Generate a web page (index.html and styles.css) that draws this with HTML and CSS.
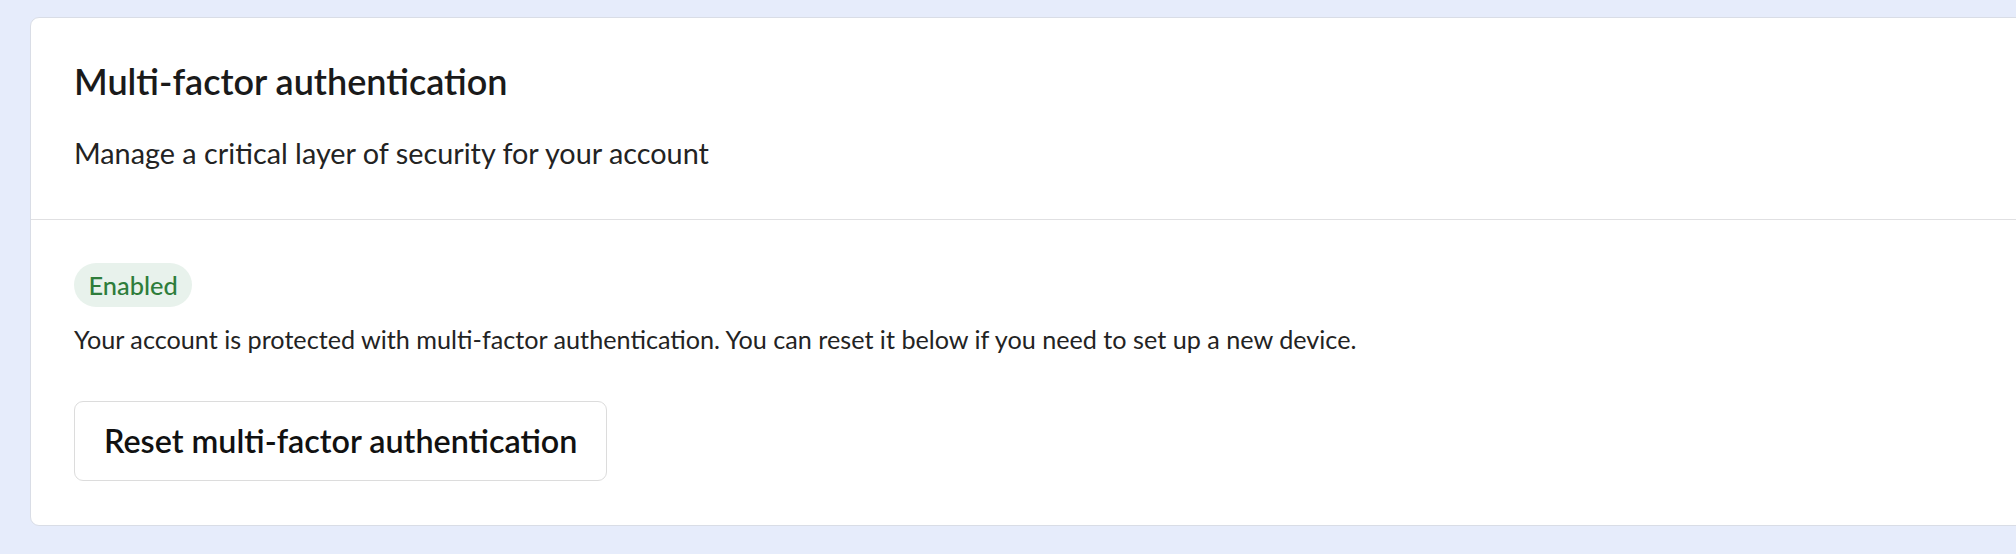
FILE: index.html
```html
<!DOCTYPE html>
<html lang="en">
<head>
<meta charset="utf-8">
<title>Multi-factor authentication</title>
<link rel="stylesheet" href="styles.css">
</head>
<body>
<section class="card">
  <header class="card-header">
    <h2 class="title">Multi-factor authentication</h2>
    <p class="subtitle">Manage a critical layer of security for your account</p>
  </header>
  <div class="card-body">
    <span class="badge">Enabled</span>
    <p class="desc">Your account is protected with multi-factor authentication. You can reset it below if you need to set up a new device.</p>
    <button class="btn" type="button">Reset multi-factor authentication</button>
  </div>
</section>
</body>
</html>
```

FILE: styles.css
```css
html, body {
  margin: 0;
  padding: 0;
}
body {
  background: #e6ecfb;
  font-family: Lato, "Noto Sans", sans-serif;
  color: #1f1f1f;
  overflow: hidden;
}
.card {
  margin: 17px -20px 0 30px;
  background: #ffffff;
  border: 1px solid #d9dde6;
  border-radius: 9px;
}
.card-header {
  padding: 41.5px 42px 43.5px 43px;
  border-bottom: 1px solid #e0e0e2;
}
.title {
  margin: 0;
  font-size: 36px;
  line-height: 43.2px;
  font-weight: 600;
  color: #1a1a1a;
}
.subtitle {
  margin: 29.6px 0 0;
  font-size: 28.8px;
  line-height: 43.2px;
  color: #232323;
}
.card-body {
  padding: 43px 42px 44px 43px;
  display: flex;
  flex-direction: column;
  align-items: flex-start;
}
.badge {
  display: inline-flex;
  align-items: center;
  height: 44px;
  padding: 0 14.5px;
  border-radius: 22px;
  background: #e8f2ec;
  color: #2e7d3b;
  font-size: 25.4px;
  font-weight: 500;
  box-sizing: border-box;
}
.desc {
  margin: 12.6px 0 0;
  font-size: 25.2px;
  line-height: 38.4px;
  color: #232323;
}
.btn {
  margin-top: 42.7px;
  height: 80px;
  padding: 0 29px;
  background: #ffffff;
  border: 1.5px solid #dcdcdc;
  border-radius: 9px;
  font-family: Lato, "Noto Sans", sans-serif;
  font-size: 32.3px;
  font-weight: 600;
  color: #111111;
  display: inline-flex;
  align-items: center;
}
```
